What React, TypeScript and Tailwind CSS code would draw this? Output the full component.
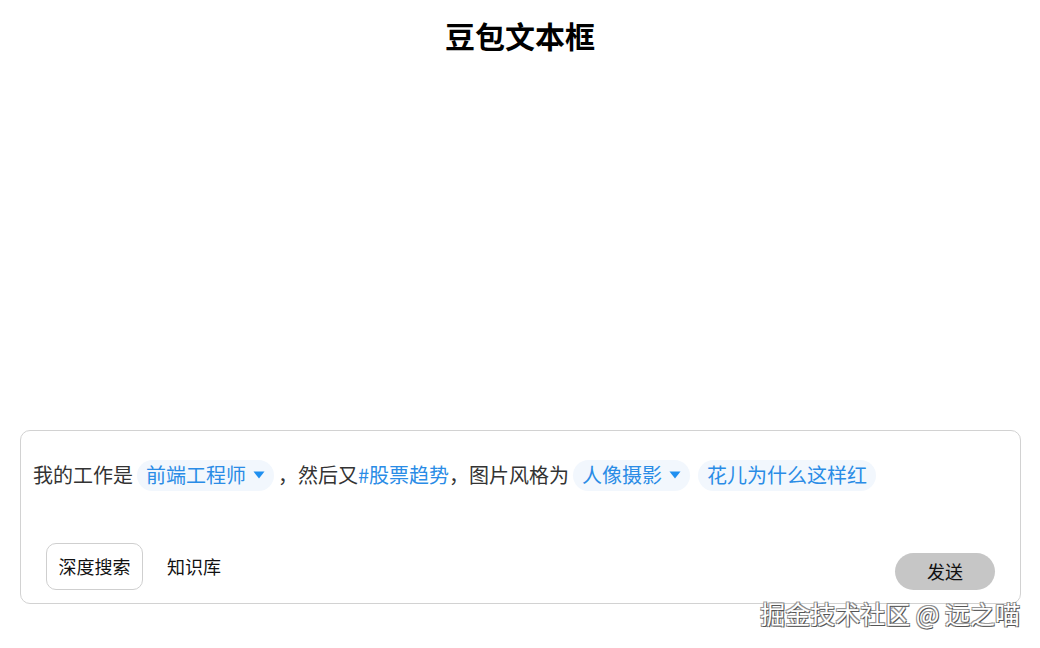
import { useState } from 'react'

type Segment =
  | { type: 'text'; value: string }
  | { type: 'topic'; value: string }
  | { type: 'select'; value: string }
  | { type: 'slot'; value: string }

const segments: Segment[] = [
  { type: 'text', value: '我的工作是' },
  { type: 'select', value: '前端工程师' },
  { type: 'text', value: '，然后又' },
  { type: 'topic', value: '#股票趋势' },
  { type: 'text', value: '，图片风格为' },
  { type: 'select', value: '人像摄影' },
  { type: 'slot', value: '花儿为什么这样红' },
]

function Caret() {
  return (
    <svg width="12" height="8" viewBox="0 0 12 8" className="ml-[7px] shrink-0">
      <path d="M0.5 0.5h11L6 7.5z" fill="#1f8ff0" />
    </svg>
  )
}

function Pill({ segment }: { segment: Segment }) {
  return (
    <span className="mx-[4px] inline-flex h-[31px] items-center rounded-full bg-[#f2f7fd] px-[9px] text-[#2a8ce6]">
      {segment.value}
      {segment.type === 'select' && <Caret />}
    </span>
  )
}

export default function App() {
  const [deepSearch, setDeepSearch] = useState(false)

  return (
    <div
      className="relative flex min-h-[648px] flex-col bg-white"
      style={{ fontFamily: '"Noto Sans CJK SC", "Noto Sans", sans-serif' }}
    >
      <h1 className="pt-[17px] text-center text-[30px] font-bold leading-[36px] text-black">
        豆包文本框
      </h1>

      <div className="mb-[44px] ml-[20px] mr-[19px] mt-auto rounded-[10px] border border-[#d2d2d2] bg-white pb-[13px] pl-[12px] pr-[25px] pt-[28px]">
        <div className="flex h-[32px] items-center text-[20px] text-[#333]">
          {segments.map((s, i) =>
            s.type === 'text' ? (
              <span key={i}>{s.value}</span>
            ) : s.type === 'topic' ? (
              <span key={i} className="text-[#2a8ce6]">
                {s.value}
              </span>
            ) : (
              <Pill key={i} segment={s} />
            ),
          )}
        </div>

        <div className="mt-[52px] flex items-end justify-between pl-[13px]">
          <div className="flex items-center gap-[12px]">
            <button
              onClick={() => setDeepSearch(!deepSearch)}
              className="h-[47px] w-[97px] rounded-[10px] border border-[#cfcfcf] text-[18px] text-[#111]"
            >
              深度搜索
            </button>
            <button className="px-[12px] text-[18px] text-[#111]">知识库</button>
          </div>
          <button className="h-[37px] w-[100px] rounded-full bg-[#c6c6c6] text-[18px] text-[#111]">
            发送
          </button>
        </div>
      </div>

      <div
        className="absolute bottom-[20px] right-[20px] text-[25px] leading-[30px] text-white"
        style={{
          textShadow:
            '1px 1px 0 #555, -1px -1px 0 #999, 1px -1px 0 #888, -1px 1px 0 #888',
        }}
      >
        掘金技术社区 @ 远之喵
      </div>
    </div>
  )
}
